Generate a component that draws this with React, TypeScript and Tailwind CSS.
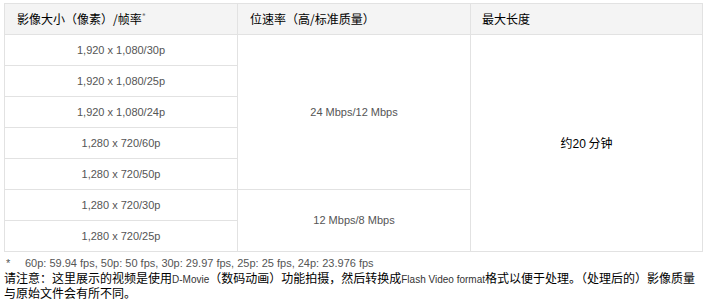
import React from 'react';

const latin = "font-['Liberation_Sans','Noto_Sans_CJK_SC',sans-serif]";
const cjk = "font-['Noto_Sans_CJK_SC',sans-serif]";

const sizes = [
  '1,920 x 1,080/30p',
  '1,920 x 1,080/25p',
  '1,920 x 1,080/24p',
  '1,280 x 720/60p',
  '1,280 x 720/50p',
  '1,280 x 720/30p',
  '1,280 x 720/25p',
];

function Cell({ children, rowSpan }: { children: React.ReactNode; rowSpan?: number }) {
  return (
    <td
      rowSpan={rowSpan}
      className={`border border-[#e2e2e2] text-center align-middle text-[11px] text-[#555] ${latin} h-[31px] p-0`}
    >
      {children}
    </td>
  );
}

export default function App() {
  return (
    <div className="w-[710px] h-[305px] bg-white overflow-hidden pt-[3px] pl-[4px]">
      <table className="border-collapse w-[698px] table-fixed">
        <colgroup>
          <col className="w-[233px]" />
          <col className="w-[233px]" />
          <col className="w-[232px]" />
        </colgroup>
        <thead>
          <tr className="bg-[#f4f4f4]">
            <th className={`border border-[#e2e2e2] h-[31px] pl-[12px] text-left font-normal text-[12px] text-black ${cjk}`}>
              影像大小（像素）/帧率<span className="text-[9px] text-[#777] align-top">*</span>
            </th>
            <th className={`border border-[#e2e2e2] h-[31px] pl-[12px] text-left font-normal text-[12px] text-black ${cjk}`}>
              位速率（高/标准质量）
            </th>
            <th className={`border border-[#e2e2e2] h-[31px] pl-[11px] text-left font-normal text-[12px] text-black ${cjk}`}>
              最大长度
            </th>
          </tr>
        </thead>
        <tbody>
          {sizes.map((s, i) => (
            <tr key={s}>
              <Cell>{s}</Cell>
              {i === 0 && <Cell rowSpan={5}>24 Mbps/12 Mbps</Cell>}
              {i === 5 && <Cell rowSpan={2}>12 Mbps/8 Mbps</Cell>}
              {i === 0 && (
                <td
                  rowSpan={7}
                  className={`border border-[#e2e2e2] text-center align-middle text-[12px] text-black ${cjk} p-0`}
                >
                  约<span className={latin}>20</span> 分钟
                </td>
              )}
            </tr>
          ))}
        </tbody>
      </table>

      <div className={`mt-[5px] flex text-[11px] text-[#555] leading-[13px] ${latin}`}>
        <span className="w-[21px] pl-[2px]">*</span>
        <span>60p: 59.94 fps, 50p: 50 fps, 30p: 29.97 fps, 25p: 25 fps, 24p: 23.976 fps</span>
      </div>
      <p className={`mt-[1px] text-[12px] leading-[13px] text-black whitespace-nowrap ${cjk}`}>
        请注意：这里展示的视频是使用<span className={`text-[10px] text-[#333] ${latin}`}>D-Movie</span>（数码动画）功能拍摄，然后转换成<span className={`text-[10px] text-[#333] ${latin}`}>Flash Video format</span>格式以便于处理。（处理后的）影像质量
        <br />
        与原始文件会有所不同。
      </p>
    </div>
  );
}
